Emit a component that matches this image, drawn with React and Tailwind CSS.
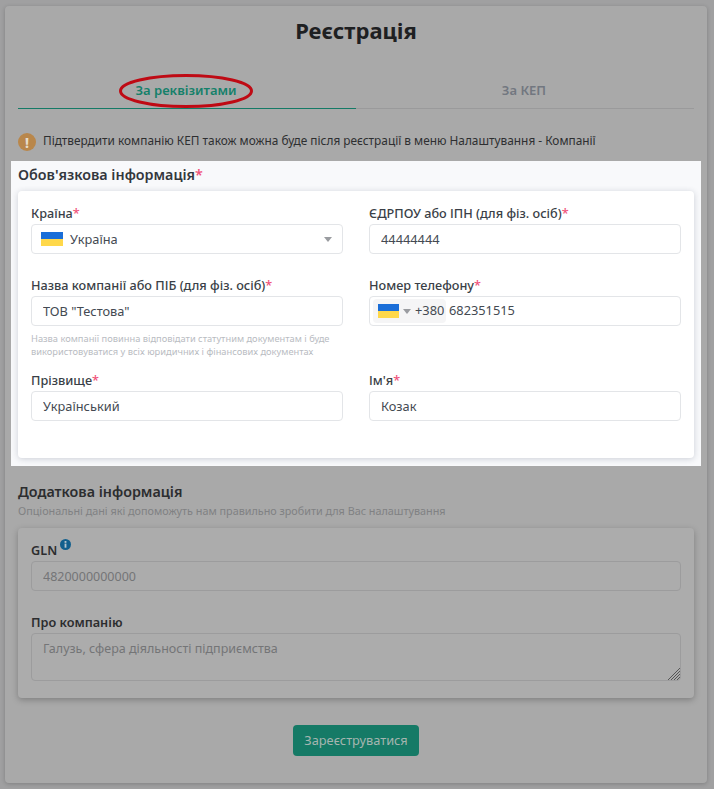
const font = { fontFamily: '"Noto Sans", sans-serif' };

function Star() {
  return <span className="text-[#f0527a]">*</span>;
}

function Flag({ className }) {
  return (
    <span className={"flex flex-col shrink-0 " + className}>
      <span className="flex-1 bg-[#1a6ed8]" />
      <span className="flex-1 bg-[#ffd84a]" />
    </span>
  );
}

function Field({ label, required, value }) {
  return (
    <div>
      <label className="block h-5 text-[12.7px] leading-5 font-medium text-[#3a3f47]">
        {label}
        {required && <Star />}
      </label>
      <input
        readOnly
        value={value}
        className="block w-full h-[30px] mt-px rounded border border-[#e3e5e8] bg-white px-[11px] text-[12.8px] text-[#444a52] outline-none"
      />
    </div>
  );
}

function Caret({ className }) {
  return (
    <svg viewBox="0 0 10 6" className={className}>
      <path d="M0 0h10L5 6z" fill="#9a9ca0" />
    </svg>
  );
}

export default function App() {
  return (
    <div className="min-h-[789px] bg-[#a0a0a1] pl-[5px] pr-[7px] pt-1.5 pb-1.5" style={font}>
      <div className="relative rounded bg-[#a9a9a9] px-[13px] pb-[27px] shadow-[0_1px_4px_rgba(0,0,0,0.2)]">
        <h1 className="pt-[9px] text-center text-[22px] leading-[30px] font-bold text-[#1e2022]">
          Реєстрація
        </h1>

        <div className="mt-[31px] flex text-[13px] font-semibold">
          <div className="relative flex-1 h-[33px] border-b border-[#157a66] pt-[5px] pr-0.5 text-center leading-[18px] text-[#15806a]">
            За реквізитами
            <svg viewBox="0 0 134 34" className="absolute left-[101px] top-[-2px] w-[134px] h-[34px]">
              <ellipse cx="67" cy="17" rx="65.5" ry="15.5" fill="none" stroke="#bf0a14" strokeWidth="3" />
            </svg>
          </div>
          <div className="flex-1 h-[33px] border-b border-[#9a9a9b] pt-[5px] pr-0.5 text-center leading-[18px] text-[#727780]">
            За КЕП
          </div>
        </div>

        <div className="mt-[23px] flex items-center gap-[7px] h-5 text-[11.85px] text-[#2e2f31]">
          <span className="flex items-center justify-center w-[18px] h-[18px] rounded-full bg-[#b9874b] text-[14px] font-extrabold text-[#e6dccb]">
            !
          </span>
          <span className="-mt-0.5">
            Підтвердити компанію КЕП також можна буде після реєстрації в меню Налаштування - Компанії
          </span>
        </div>

        <section className="mt-[9px] -mx-[7px] h-[305px] bg-[#f8f9fb] px-[7px] pt-[3px]">
          <h2 className="text-[14.3px] leading-[22px] font-semibold text-[#33373d]">
            Обов'язкова інформація
            <Star />
          </h2>
          <div className="mt-[5px] h-[267px] rounded bg-white px-[13px] pt-[12px] shadow-[0_1px_6px_rgba(30,40,70,0.2)]">
            <div className="grid grid-cols-2 gap-x-[26px]">
              <div>
                <label className="block h-5 text-[12.7px] leading-5 font-medium text-[#3a3f47]">
                  Країна
                  <Star />
                </label>
                <div className="flex items-center h-[30px] mt-px rounded border border-[#e3e5e8] pl-[9px] pr-[10px] text-[12.8px] text-[#444a52]">
                  <Flag className="w-[22px] h-[14px]" />
                  <span className="ml-[7px] flex-1 pt-px">Україна</span>
                  <Caret className="w-2 h-[5px]" />
                </div>
              </div>
              <Field label="ЄДРПОУ або ІПН (для фіз. осіб)" required value="44444444" />

              <div className="mt-[21px]">
                <Field label="Назва компанії або ПІБ (для фіз. осіб)" required value={'ТОВ "Тестова"'} />
                <p className="mt-[6px] text-[9.3px] leading-[13px] text-[#b9bcc2]">
                  Назва компанії повинна відповідати статутним документам і буде використовуватися у всіх юридичних і фінансових документах
                </p>
              </div>
              <div className="mt-[21px]">
                <label className="block h-5 text-[12.7px] leading-5 font-medium text-[#3a3f47]">
                  Номер телефону
                  <Star />
                </label>
                <div className="flex items-center h-[30px] mt-px rounded border border-[#e3e5e8] pl-[3px] text-[12.8px] text-[#444a52]">
                  <span className="flex items-center h-6 w-[73px] rounded-sm bg-[#f5f5f6] pl-[5px]">
                    <Flag className="w-[21px] h-[14px]" />
                    <Caret className="ml-1 w-2 h-[5px]" />
                    <span className="ml-[4px]">+380</span>
                  </span>
                  <span className="ml-[3px]">682351515</span>
                </div>
              </div>

              <div className="mt-[12px]">
                <Field label="Прізвище" required value="Український" />
              </div>
              <div className="mt-[12px]">
                <Field label="Ім'я" required value="Козак" />
              </div>
            </div>
          </div>
        </section>

        <h2 className="mt-[15px] text-[14.3px] leading-[22px] font-semibold text-[#2c2d2f]">
          Додаткова інформація
        </h2>
        <p className="mt-0 text-[10.8px] leading-[15px] text-[#808183]">
          Опціональні дані які допоможуть нам правильно зробити для Вас налаштування
        </p>

        <div className="mt-[10px] h-[170px] rounded bg-[#acacac] px-[13px] pt-[11px] shadow-[0_2px_6px_rgba(0,0,0,0.25)]">
          <label className="flex h-[21px] text-[12.7px] leading-[22px] font-semibold text-[#2c2d2f]">
            GLN
            <svg viewBox="0 0 12 12" className="ml-[3px] mt-0 w-[11px] h-[11px]">
              <circle cx="6" cy="6" r="6" fill="#115f8d" />
              <rect x="5" y="5" width="2" height="4.5" fill="#b4c3cc" />
              <rect x="5" y="2.2" width="2" height="2" fill="#b4c3cc" />
            </svg>
          </label>
          <input
            readOnly
            placeholder="4820000000000"
            className="block w-full h-[30px] mt-px rounded border border-[#9c9c9d] bg-transparent px-[11px] text-[12.5px] placeholder:text-[#747577] outline-none"
          />
          <label className="block mt-[21px] h-5 text-[12.7px] leading-[21px] font-semibold text-[#2c2d2f]">
            Про компанію
          </label>
          <div className="relative mt-px">
            <textarea
              readOnly
              placeholder="Галузь, сфера діяльності підприємства"
              className="block w-full h-[48px] rounded border border-[#9c9c9d] bg-transparent px-[11px] py-[6px] text-[12.5px] placeholder:text-[#747577] outline-none resize-none"
            />
            <svg viewBox="0 0 12 12" className="absolute right-[1px] bottom-[1px] w-3 h-3">
              <path d="M12 0L0 12M12 3L3 12M12 6L6 12M12 9L9 12" stroke="#555" strokeWidth="1" fill="none" />
            </svg>
          </div>
        </div>

        <div className="mt-[27px] flex justify-center">
          <button className="w-[126px] h-[31px] rounded-sm bg-[#157a66] text-[12.8px] text-[#a5b5b0]">
            Зареєструватися
          </button>
        </div>
      </div>
    </div>
  );
}
